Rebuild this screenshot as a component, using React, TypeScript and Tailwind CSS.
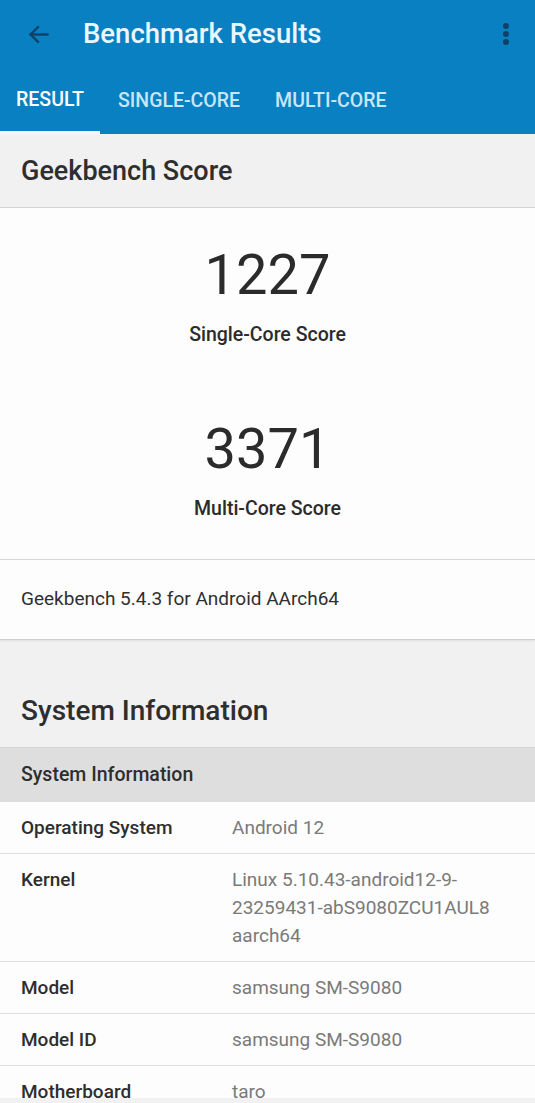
import React from "react";

const rows: { label: string; value: string[] }[] = [
  { label: "Operating System", value: ["Android 12"] },
  { label: "Kernel", value: ["Linux 5.10.43-android12-9-", "23259431-abS9080ZCU1AUL8", "aarch64"] },
  { label: "Model", value: ["samsung SM-S9080"] },
  { label: "Model ID", value: ["samsung SM-S9080"] },
  { label: "Motherboard", value: ["taro"] },
];

export default function App() {
  return (
    <div className="w-[535px] h-[1103px] flex flex-col overflow-hidden bg-[#f1f1f1] font-['Roboto',sans-serif] text-[#2f2f2f]">
      <div className="flex-1 overflow-hidden">
        {/* App bar */}
        <div className="bg-[#0880c2]">
          <div className="h-[68px] flex items-center">
            <div className="w-[76px] flex justify-center">
              <svg width="27" height="27" viewBox="0 0 24 24" fill="none" stroke="#0d4266" strokeWidth="2.1" strokeLinecap="square">
                <path d="M20 12H5" />
                <path d="M11.5 5.5L5 12l6.5 6.5" />
              </svg>
            </div>
            <div className="pl-[7px] text-[27.5px] leading-[34px] font-medium text-[#eaf7ff]">Benchmark Results</div>
            <div className="ml-auto w-[56px] flex justify-center pr-[2px]">
              <svg width="8" height="26" viewBox="0 0 8 26">
                <circle cx="4" cy="5" r="3" fill="#0d4266" />
                <circle cx="4" cy="13" r="3" fill="#0d4266" />
                <circle cx="4" cy="21" r="3" fill="#0d4266" />
              </svg>
            </div>
          </div>
          <div className="h-[66px] flex">
            <div className="w-[100px] flex flex-col">
              <div className="flex-1 flex items-center justify-center text-[19.5px] font-medium text-white pt-[1px]">RESULT</div>
              <div className="h-[3px] bg-[#f2f7fa]" />
            </div>
            <div className="px-[18px] flex items-center text-[19.5px] font-medium text-[#c8e6f7] pb-[1px]">SINGLE-CORE</div>
            <div className="px-[17px] flex items-center text-[19.5px] font-medium text-[#c8e6f7] pb-[1px]">MULTI-CORE</div>
          </div>
        </div>

        {/* Geekbench Score header */}
        <div className="h-[74px] flex items-center px-[21px] text-[27px] leading-[32px] font-medium text-[#2e2e2e] border-b border-[#d4d4d4] pt-[1px]">
          Geekbench Score
        </div>

        {/* Scores */}
        <div className="bg-[#fdfdfd] pt-[37px] pb-[38px] flex flex-col items-center border-b border-[#d8d8d8]">
          <div className="text-[56px] leading-[60px] text-[#2b2b2b]">1227</div>
          <div className="mt-[18px] text-[19.5px] leading-[24px] font-medium text-[#2b2b2b]">Single-Core Score</div>
          <div className="mt-[72px] text-[56px] leading-[60px] text-[#2b2b2b]">3371</div>
          <div className="mt-[18px] text-[19.5px] leading-[24px] font-medium text-[#2b2b2b]">Multi-Core Score</div>
        </div>

        <div className="bg-[#fdfdfd] h-[80px] flex items-center px-[21px] text-[19px] text-[#2f2f2f] border-b border-[#cfcfcf] shadow-[0_1px_2px_rgba(0,0,0,0.08)]">
          Geekbench 5.4.3 for Android AArch64
        </div>

        {/* System Information */}
        <div className="h-[108px] flex items-end pb-[20px] px-[21px] text-[28px] leading-[32px] font-medium text-[#2e2e2e] border-b border-[#d4d4d4]">
          System Information
        </div>
        <div className="h-[54px] bg-[#dedede] flex items-center px-[21px] text-[19.5px] font-medium text-[#2e2e2e]">
          System Information
        </div>
        <div className="bg-[#fdfdfd]">
          {rows.map((r) => (
            <div key={r.label} className="flex border-b-[1.5px] border-[#e0e0e0] pt-[11.5px] pb-[11.5px] text-[19px] leading-[28px]">
              <div className="w-[232px] pl-[21px] font-medium text-[#2e2e2e]">{r.label}</div>
              <div className="flex-1 text-[#7a7a7a]">
                {r.value.map((v) => (
                  <div key={v}>{v}</div>
                ))}
              </div>
            </div>
          ))}
        </div>
      </div>
      <div className="h-[5px] bg-[#f1f1f1]" />
    </div>
  );
}
